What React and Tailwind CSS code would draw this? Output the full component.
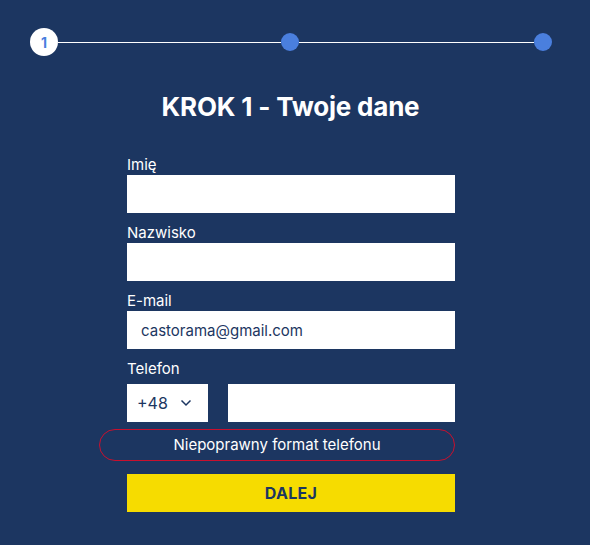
export default function App() {
  const field = "block w-full h-[38px] bg-white px-[14px] text-[15px] text-[#1c3661] outline-none";
  return (
    <div className="w-[590px] h-[545px] bg-[#1c3661] text-white font-['Inter',sans-serif] overflow-hidden">
      <div className="flex items-center pl-[30px] pr-[38px] pt-[28px]">
        <div className="w-[28px] h-[28px] shrink-0 rounded-full bg-white text-[#4a7fde] text-[14px] font-bold flex items-center justify-center">1</div>
        <div className="w-[223px] h-px bg-white" />
        <div className="w-[18px] h-[18px] shrink-0 rounded-full bg-[#4a7fde]" />
        <div className="flex-1 h-px bg-white" />
        <div className="w-[18px] h-[18px] shrink-0 rounded-full bg-[#4a7fde]" />
      </div>
      <h1 className="mt-[34px] text-center text-[26px] font-bold leading-[34px] tracking-[-0.2px] pr-[9px]">KROK 1 - Twoje dane</h1>
      <form className="w-[328px] mt-[31px] ml-[127px]">
        <label className="block text-[15px] leading-[20px]">Imię</label>
        <input className={field} />
        <label className="block mt-[10px] text-[15px] leading-[20px]">Nazwisko</label>
        <input className={field} />
        <label className="block mt-[10px] text-[15px] leading-[20px]">E-mail</label>
        <input className={field} defaultValue="castorama@gmail.com" />
        <label className="block mt-[10px] text-[15px] leading-[20px]">Telefon</label>
        <div className="flex gap-[20px] mt-[5px]">
          <div className="w-[81px] shrink-0 h-[38px] bg-white flex items-center justify-between pl-[10px] pr-[16px] text-[16px] text-[#1c3661]">
            <span>+48</span>
            <svg width="12" height="8" viewBox="0 0 12 8" fill="none" stroke="#1c3661" strokeWidth="1.5"><path d="M1.5 1.5 6 6l4.5-4.5" /></svg>
          </div>
          <input className="flex-1 min-w-0 w-0 h-[38px] bg-white outline-none" />
        </div>
        <div className="-ml-[28px] mt-[7px] h-[32px] rounded-full border border-[#c8102e] flex items-center justify-center text-[15px]">
          Niepoprawny format telefonu
        </div>
        <button type="button" className="mt-[13px] w-full h-[38px] bg-[#f6dc00] text-[#1c3661] text-[16px] font-bold tracking-[0.3px]">DALEJ</button>
      </form>
    </div>
  );
}
